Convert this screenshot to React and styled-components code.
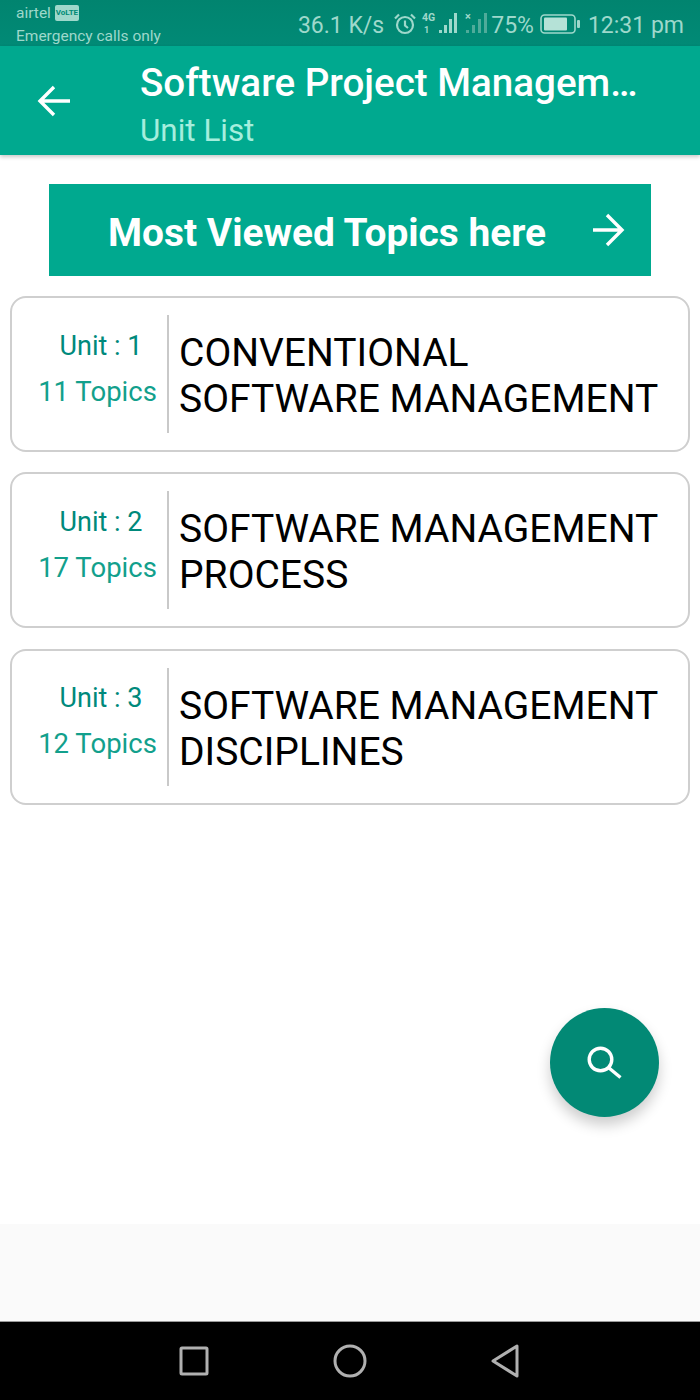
import React from 'react';
import styled, { createGlobalStyle } from 'styled-components';

const GlobalStyle = createGlobalStyle`
  html, body {
    margin: 0;
    padding: 0;
    background: #fff;
    font-family: Roboto, "Noto Sans", sans-serif;
  }
`;

const Page = styled.div`
  position: relative;
  width: 700px;
  height: 1400px;
  display: flex;
  flex-direction: column;
  overflow: hidden;
  background: #fff;
`;

const StatusBar = styled.div`
  height: 46px;
  flex: none;
  display: flex;
  justify-content: space-between;
  background: linear-gradient(#01846f, #018a76);
  color: #9ed8cb;
`;

const Carrier = styled.div`
  padding: 4px 0 0 16px;
  font-size: 15.5px;
  line-height: 20px;
`;

const CarrierName = styled.div`
  display: flex;
  align-items: center;
  gap: 4px;
  height: 17px;
`;

const VolteBadge = styled.span`
  width: 24px;
  height: 16px;
  border-radius: 2px;
  background: #9ed8cb;
  color: #018a76;
  font-size: 8px;
  font-weight: 700;
  line-height: 16px;
  text-align: center;
`;

const EmergencyText = styled.div`
  margin-top: 5px;
  white-space: nowrap;
`;

const StatusRight = styled.div`
  display: flex;
  align-items: center;
  padding: 4px 16px 0 0;
  font-size: 23px;
  white-space: nowrap;
`;

const AlarmSvg = styled.svg`
  margin: 0 0 2px 10px;
`;

const SignalSvg = styled.svg`
  margin: 0 0 4px 6px;
  overflow: visible;
`;

const NoSignalSvg = styled.svg`
  margin: 0 2px 4px 7px;
  overflow: visible;
`;

const BatterySvg = styled.svg`
  margin: 0 8px 3px 6px;
`;

const Toolbar = styled.header`
  height: 109px;
  flex: none;
  display: flex;
  align-items: center;
  background: #00a98f;
  box-shadow: 0 2px 4px rgba(0, 0, 0, 0.22);
  position: relative;
`;

const BackButton = styled.div`
  width: 140px;
  flex: none;
  display: flex;
  padding-left: 36px;
  box-sizing: border-box;
`;

const TitleBlock = styled.div`
  width: 520px;
  padding-top: 8px;
`;

const Title = styled.div`
  color: #fff;
  font-size: 38.6px;
  font-weight: 500;
  line-height: 46px;
  white-space: nowrap;
`;

const Subtitle = styled.div`
  margin-top: 6px;
  color: #a5eedd;
  font-size: 31.4px;
  line-height: 38px;
`;

const Content = styled.main`
  flex: 1;
  display: flex;
  flex-direction: column;
  padding: 29px 10px 0;
`;

const Banner = styled.div`
  width: 602px;
  height: 92px;
  margin: 0 auto 20px;
  flex: none;
  display: flex;
  align-items: center;
  justify-content: space-between;
  box-sizing: border-box;
  padding: 0 26px 0 59px;
  background: #00a98f;
  color: #fff;
  font-size: 38.9px;
  font-weight: 700;
`;

const BannerText = styled.span`
  padding-top: 5px;
`;

const CardList = styled.div`
  display: flex;
  flex-direction: column;
  gap: 20.4px;
`;

const Card = styled.div`
  height: 156px;
  box-sizing: border-box;
  display: flex;
  align-items: center;
  border: 2px solid #cfcfcf;
  border-radius: 16px;
  background: #fff;
`;

const UnitInfo = styled.div`
  width: 157px;
  height: 118px;
  flex: none;
  box-sizing: border-box;
  padding: 0 0 11px 16px;
  border-right: 2px solid #c9c9c9;
  display: flex;
  flex-direction: column;
  align-items: center;
  justify-content: center;
  gap: 16px;
`;

const UnitLabel = styled.div`
  padding-left: 7px;
  color: #00897b;
  font-size: 27px;
  line-height: 30px;
`;

const TopicCount = styled.div`
  color: #12a08c;
  font-size: 27.5px;
  line-height: 30px;
  white-space: nowrap;
`;

const UnitTitle = styled.div`
  padding: 4px 19px 0 10px;
  color: #000;
  font-size: 39px;
  line-height: 46px;
`;

const Fab = styled.button`
  position: absolute;
  left: 550px;
  top: 1008px;
  width: 109px;
  height: 109px;
  padding: 0;
  border: none;
  border-radius: 50%;
  display: flex;
  align-items: center;
  justify-content: center;
  background: #028975;
  box-shadow: 0 8px 14px rgba(0, 0, 0, 0.2);
`;

const FooterBand = styled.div`
  height: 97px;
  flex: none;
  background: #fafafa;
`;

const NavBar = styled.nav`
  height: 79px;
  flex: none;
  box-sizing: border-box;
  border-top: 1px solid #9a9a9a;
  display: flex;
  align-items: center;
  justify-content: center;
  gap: 124px;
  padding-right: 2px;
  background: #000;
`;

const BackArrow = () => (
  <svg width="36" height="36" viewBox="0 0 36 36" fill="none" stroke="#fff" strokeWidth="3.4">
    <path d="M34 18H5M18 4 4 18l14 14" />
  </svg>
);

const ForwardArrow = () => (
  <svg width="36" height="36" viewBox="0 0 36 36" fill="none" stroke="#fff" strokeWidth="3.4">
    <path d="M4 18h27M18 3l15 15-15 15" />
  </svg>
);

const AlarmIcon = () => (
  <AlarmSvg width="22" height="22" viewBox="0 0 22 22" fill="none" stroke="#9ed8cb" strokeWidth="2.2">
    <circle cx="11" cy="12" r="8" />
    <path d="M11 7.5V12.5l3 2.5M1 5.5l4-4M21 5.5l-4-4" />
  </AlarmSvg>
);

const SignalIcon = () => (
  <SignalSvg width="36" height="20" viewBox="0 0 36 20" fill="#9ed8cb">
    <text x="0" y="8" fontSize="10.5" fontWeight="700" fontFamily="Roboto">4G</text>
    <text x="2" y="20" fontSize="9" fontWeight="700" fontFamily="Roboto">1</text>
    <rect x="17" y="17" width="3" height="3" />
    <rect x="22" y="12" width="3" height="8" />
    <rect x="27" y="6" width="3" height="14" />
    <rect x="32" y="0" width="3" height="20" />
  </SignalSvg>
);

const NoSignalIcon = () => (
  <NoSignalSvg width="24" height="20" viewBox="0 0 24 20" fill="#4fab9a">
    <text x="0" y="7" fontSize="11" fontWeight="700" fontFamily="Roboto" fill="#9ed8cb">×</text>
    <rect x="1" y="17" width="3" height="3" />
    <rect x="7" y="12" width="3" height="8" />
    <rect x="13" y="6" width="3" height="14" />
    <rect x="19" y="0" width="3" height="20" />
  </NoSignalSvg>
);

const BatteryIcon = () => (
  <BatterySvg width="40" height="20" viewBox="0 0 40 20">
    <rect x="1" y="1" width="34" height="18" rx="3.5" fill="none" stroke="#9ed8cb" strokeWidth="1.6" />
    <rect x="4" y="3.5" width="23" height="13" rx="1" fill="#b5e2d7" />
    <rect x="37" y="6" width="3" height="8" rx="1" fill="#9ed8cb" />
  </BatterySvg>
);

const SearchIcon = () => (
  <svg width="36" height="36" viewBox="0 0 36 36" fill="none" stroke="#fff" strokeWidth="3.4">
    <circle cx="13.5" cy="14.5" r="11.3" />
    <path d="M22 23l11.5 9.5" />
  </svg>
);

const SquareIcon = () => (
  <svg width="30" height="30" viewBox="0 0 30 30" fill="none" stroke="#b0b0b0" strokeWidth="3" strokeLinejoin="round">
    <rect x="2" y="2" width="26" height="26" rx="1" />
  </svg>
);

const CircleIcon = () => (
  <svg width="34" height="34" viewBox="0 0 34 34" fill="none" stroke="#b0b0b0" strokeWidth="3">
    <circle cx="17" cy="17" r="15" />
  </svg>
);

const TriangleIcon = () => (
  <svg width="28" height="34" viewBox="0 0 28 34" fill="none" stroke="#b0b0b0" strokeWidth="3" strokeLinejoin="round">
    <path d="M2 17 26 2v30z" />
  </svg>
);

const units = [
  { unit: 1, topics: 11, title: 'CONVENTIONAL SOFTWARE MANAGEMENT' },
  { unit: 2, topics: 17, title: 'SOFTWARE MANAGEMENT PROCESS' },
  { unit: 3, topics: 12, title: 'SOFTWARE MANAGEMENT DISCIPLINES' },
];

const App = () => (
  <Page>
    <GlobalStyle />
    <StatusBar>
      <Carrier>
        <CarrierName>
          airtel <VolteBadge>VoLTE</VolteBadge>
        </CarrierName>
        <EmergencyText>Emergency calls only</EmergencyText>
      </Carrier>
      <StatusRight>
        36.1 K/s
        <AlarmIcon />
        <SignalIcon />
        <NoSignalIcon />
        75%
        <BatteryIcon />
        12:31 pm
      </StatusRight>
    </StatusBar>
    <Toolbar>
      <BackButton>
        <BackArrow />
      </BackButton>
      <TitleBlock>
        <Title>Software Project Managem…</Title>
        <Subtitle>Unit List</Subtitle>
      </TitleBlock>
    </Toolbar>
    <Content>
      <Banner>
        <BannerText>Most Viewed Topics here</BannerText>
        <ForwardArrow />
      </Banner>
      <CardList>
        {units.map((item) => (
          <Card key={item.unit}>
            <UnitInfo>
              <UnitLabel>Unit : {item.unit}</UnitLabel>
              <TopicCount>{item.topics} Topics</TopicCount>
            </UnitInfo>
            <UnitTitle>{item.title}</UnitTitle>
          </Card>
        ))}
      </CardList>
    </Content>
    <Fab>
      <SearchIcon />
    </Fab>
    <FooterBand />
    <NavBar>
      <SquareIcon />
      <CircleIcon />
      <TriangleIcon />
    </NavBar>
  </Page>
);

export default App;
